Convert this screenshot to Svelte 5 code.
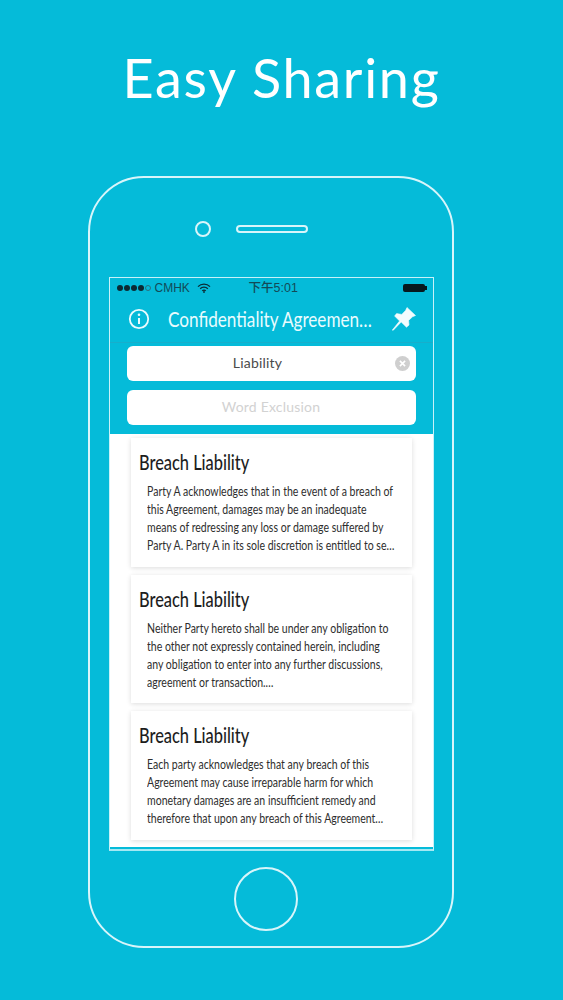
<script>
  const cards = [
    {
      title: 'Breach Liability',
      lines: [
        'Party A acknowledges that in the event of a breach of',
        'this Agreement, damages may be an inadequate',
        'means of redressing any loss or damage suffered by',
        'Party A. Party A in its sole discretion is entitled to se…'
      ]
    },
    {
      title: 'Breach Liability',
      lines: [
        'Neither Party hereto shall be under any obligation to',
        'the other not expressly contained herein, including',
        'any obligation to enter into any further discussions,',
        'agreement or transaction.…'
      ]
    },
    {
      title: 'Breach Liability',
      lines: [
        'Each party acknowledges that any breach of this',
        'Agreement may cause irreparable harm for which',
        'monetary damages are an insufficient remedy and',
        'therefore that upon any breach of this Agreement…'
      ]
    }
  ];
</script>

<div class="page">
  <h1 class="headline">Easy Sharing</h1>

  <div class="phone">
    <div class="phone-top">
      <span class="camera"></span>
      <span class="speaker"></span>
    </div>

    <div class="screen">
      <div class="app-head">
        <div class="status">
          <div class="status-left">
            <span class="dots">
              <i></i><i></i><i></i><i></i><i class="empty"></i>
            </span>
            <span>CMHK</span>
            <svg class="wifi" viewBox="0 0 14 10" width="14" height="10">
              <path d="M1 3.6a8.4 8.4 0 0 1 12 0" />
              <path d="M3.2 5.8a5.2 5.2 0 0 1 7.6 0" />
              <path d="M5.3 7.8a2.4 2.4 0 0 1 3.4 0" />
              <circle cx="7" cy="9" r="0.9" />
            </svg>
          </div>
          <span class="clock">下午5:01</span>
          <span class="battery"></span>
        </div>

        <div class="nav">
          <svg class="info" viewBox="0 0 22 22" width="22" height="22">
            <circle cx="11" cy="11" r="9.2" />
            <line x1="11" y1="10" x2="11" y2="16" />
            <circle class="dot" cx="11" cy="6.8" r="1.3" />
          </svg>
          <span class="nav-title">Confidentiality Agreemen…</span>
          <svg class="pin" viewBox="0 0 26 26" width="26" height="26">
            <path d="M16 1.5 24.5 9.5 21.5 10.8 17.6 14.4 18 19 15.5 21.2 10.2 16 2 24.5 1.4 24 8.6 15 3.6 10 5.6 7.6 10.8 8.4 14.6 4.4z" />
          </svg>
        </div>

        <div class="fields">
          <div class="field">
            <span class="query">Liability</span>
            <svg class="clear" viewBox="0 0 15 15" width="15" height="15">
              <circle cx="7.5" cy="7.5" r="7.5" />
              <path d="M4.9 4.9l5.2 5.2M10.1 4.9l-5.2 5.2" />
            </svg>
          </div>
          <div class="field">
            <span class="placeholder">Word Exclusion</span>
          </div>
        </div>
      </div>

      <div class="results">
        {#each cards as card}
          <div class="card">
            <h2>{card.title}</h2>
            <p>
              {#each card.lines as line}
                <span>{line}</span>
              {/each}
            </p>
          </div>
        {/each}
      </div>
    </div>

    <div class="phone-bottom">
      <span class="home"></span>
    </div>
  </div>
</div>

<style>
  :global(body) {
    margin: 0;
    background: #05bbd9;
  }

  .page {
    width: 563px;
    height: 1000px;
    overflow: hidden;
    background: #05bbd9;
    padding-top: 40px;
    box-sizing: border-box;
    font-family: 'Lato', 'Liberation Sans', sans-serif;
  }

  .headline {
    margin: 0;
    height: 76px;
    line-height: 76px;
    text-align: center;
    color: #fff;
    font-family: 'Lato', 'Open Sans', sans-serif;
    font-size: 54px;
    font-weight: 400;
    letter-spacing: 1.7px;
  }

  .phone {
    box-sizing: border-box;
    width: 366px;
    height: 772px;
    margin: 60px 0 0 88px;
    border: 2px solid #d8f5fa;
    border-radius: 56px;
    display: flex;
    flex-direction: column;
    align-items: center;
  }

  .phone-top {
    height: 99px;
    flex: none;
    display: flex;
    align-items: center;
    gap: 25px;
    padding-right: 40px;
    padding-top: 3px;
    box-sizing: border-box;
  }

  .camera {
    width: 16px;
    height: 16px;
    box-sizing: border-box;
    border: 2px solid #d8f5fa;
    border-radius: 50%;
  }

  .speaker {
    width: 72px;
    height: 8px;
    box-sizing: border-box;
    border: 2px solid #d8f5fa;
    border-radius: 4px;
  }

  .screen {
    box-sizing: border-box;
    width: 325px;
    height: 574px;
    flex: none;
    border: 1px solid #c8f1f8;
    border-bottom: 2px solid #a5e8f3;
    display: flex;
    flex-direction: column;
    background: #05bbd9;
  }

  .app-head {
    height: 156px;
    flex: none;
    box-sizing: border-box;
  }

  .status {
    height: 20px;
    padding: 0 7px;
    display: flex;
    align-items: center;
    position: relative;
    justify-content: space-between;
    color: #134a57;
    font-family: 'Liberation Sans', sans-serif;
    font-size: 12px;
  }

  .status-left {
    display: flex;
    align-items: center;
    gap: 4px;
  }

  .dots {
    display: flex;
    gap: 1px;
  }

  .dots i {
    width: 6px;
    height: 6px;
    border-radius: 50%;
    background: #0b2a33;
  }

  .dots i.empty {
    box-sizing: border-box;
    background: none;
    border: 1px solid #2a6f7d;
  }

  .wifi {
    margin-left: 3px;
  }

  .wifi path {
    fill: none;
    stroke: #0b2a33;
    stroke-width: 1.3;
  }

  .wifi circle {
    fill: #0b2a33;
  }

  .clock {
    position: absolute;
    left: 139px;
    top: 2px;
    line-height: 16px;
    font-size: 12.5px;
    font-weight: 500;
    font-family: 'Liberation Sans', 'Noto Sans CJK SC', sans-serif;
  }

  .battery {
    width: 22px;
    height: 8px;
    margin-right: 1px;
    border-radius: 2px;
    background: #07181d;
    position: relative;
  }

  .battery::after {
    content: '';
    position: absolute;
    right: -2px;
    top: 2px;
    width: 1.5px;
    height: 4px;
    background: #07181d;
  }

  .nav {
    height: 45px;
    box-sizing: border-box;
    padding: 0 16px 2px 18px;
    display: flex;
    align-items: center;
    border-bottom: 1px solid #18aecb;
  }

  .info {
    flex: none;
  }

  .info circle {
    fill: none;
    stroke: #e9fbfe;
    stroke-width: 1.8;
  }

  .info line {
    stroke: #e9fbfe;
    stroke-width: 2;
  }

  .info circle.dot {
    fill: #e9fbfe;
    stroke: none;
  }

  .nav-title {
    margin-left: 18px;
    padding-bottom: 2px;
    flex: 1;
    min-width: 0;
    color: #e9fbfe;
    font-size: 21px;
    white-space: nowrap;
    transform: scaleX(0.816);
    transform-origin: left center;
  }

  .pin {
    flex: none;
  }

  .pin path {
    fill: #f2fcfe;
    stroke: #f2fcfe;
    stroke-width: 0.6;
    stroke-linejoin: round;
  }

  .fields {
    padding: 3px 17px 0;
    display: flex;
    flex-direction: column;
    gap: 9px;
  }

  .field {
    height: 35px;
    background: #fff;
    border-radius: 6px;
    display: flex;
    align-items: center;
    justify-content: center;
    position: relative;
    font-size: 14px;
  }

  .query {
    color: #4a4a4a;
    margin-right: 27px;
    padding-bottom: 2px;
    letter-spacing: 0.2px;
  }

  .placeholder {
    color: #d2d2d2;
    padding-bottom: 2px;
    letter-spacing: 0.2px;
  }

  .clear {
    position: absolute;
    right: 6px;
    top: 10px;
  }

  .clear circle {
    fill: #cfcfcf;
  }

  .clear path {
    stroke: #fff;
    stroke-width: 1.6;
    fill: none;
  }

  .results {
    flex: 1;
    background: #fff;
    margin-bottom: 2px;
    padding: 4px 21px 0;
    display: flex;
    flex-direction: column;
    gap: 8px;
    overflow: hidden;
  }

  .card {
    box-sizing: border-box;
    height: 128.5px;
    flex: none;
    background: #fff;
    box-shadow: 0 1px 5px rgba(0, 0, 0, 0.14);
    padding: 11px 8px 0;
    overflow: hidden;
  }

  .card h2 {
    margin: 0;
    font-size: 21px;
    line-height: 26px;
    font-weight: 500;
    color: #1d1d1d;
    transform: scaleX(0.78);
    transform-origin: left center;
    white-space: nowrap;
  }

  .card p {
    margin: 7px 0 0 8px;
    font-size: 13px;
    line-height: 18px;
    color: #2e2e2e;
  }

  .card p span {
    display: block;
    white-space: nowrap;
    transform: scaleX(0.81);
    transform-origin: left center;
  }

  .phone-bottom {
    flex: 1;
    display: flex;
    align-items: center;
    justify-content: center;
    padding-right: 10px;
  }

  .home {
    width: 64px;
    height: 64px;
    box-sizing: border-box;
    border: 2px solid #d8f5fa;
    border-radius: 50%;
  }
</style>
